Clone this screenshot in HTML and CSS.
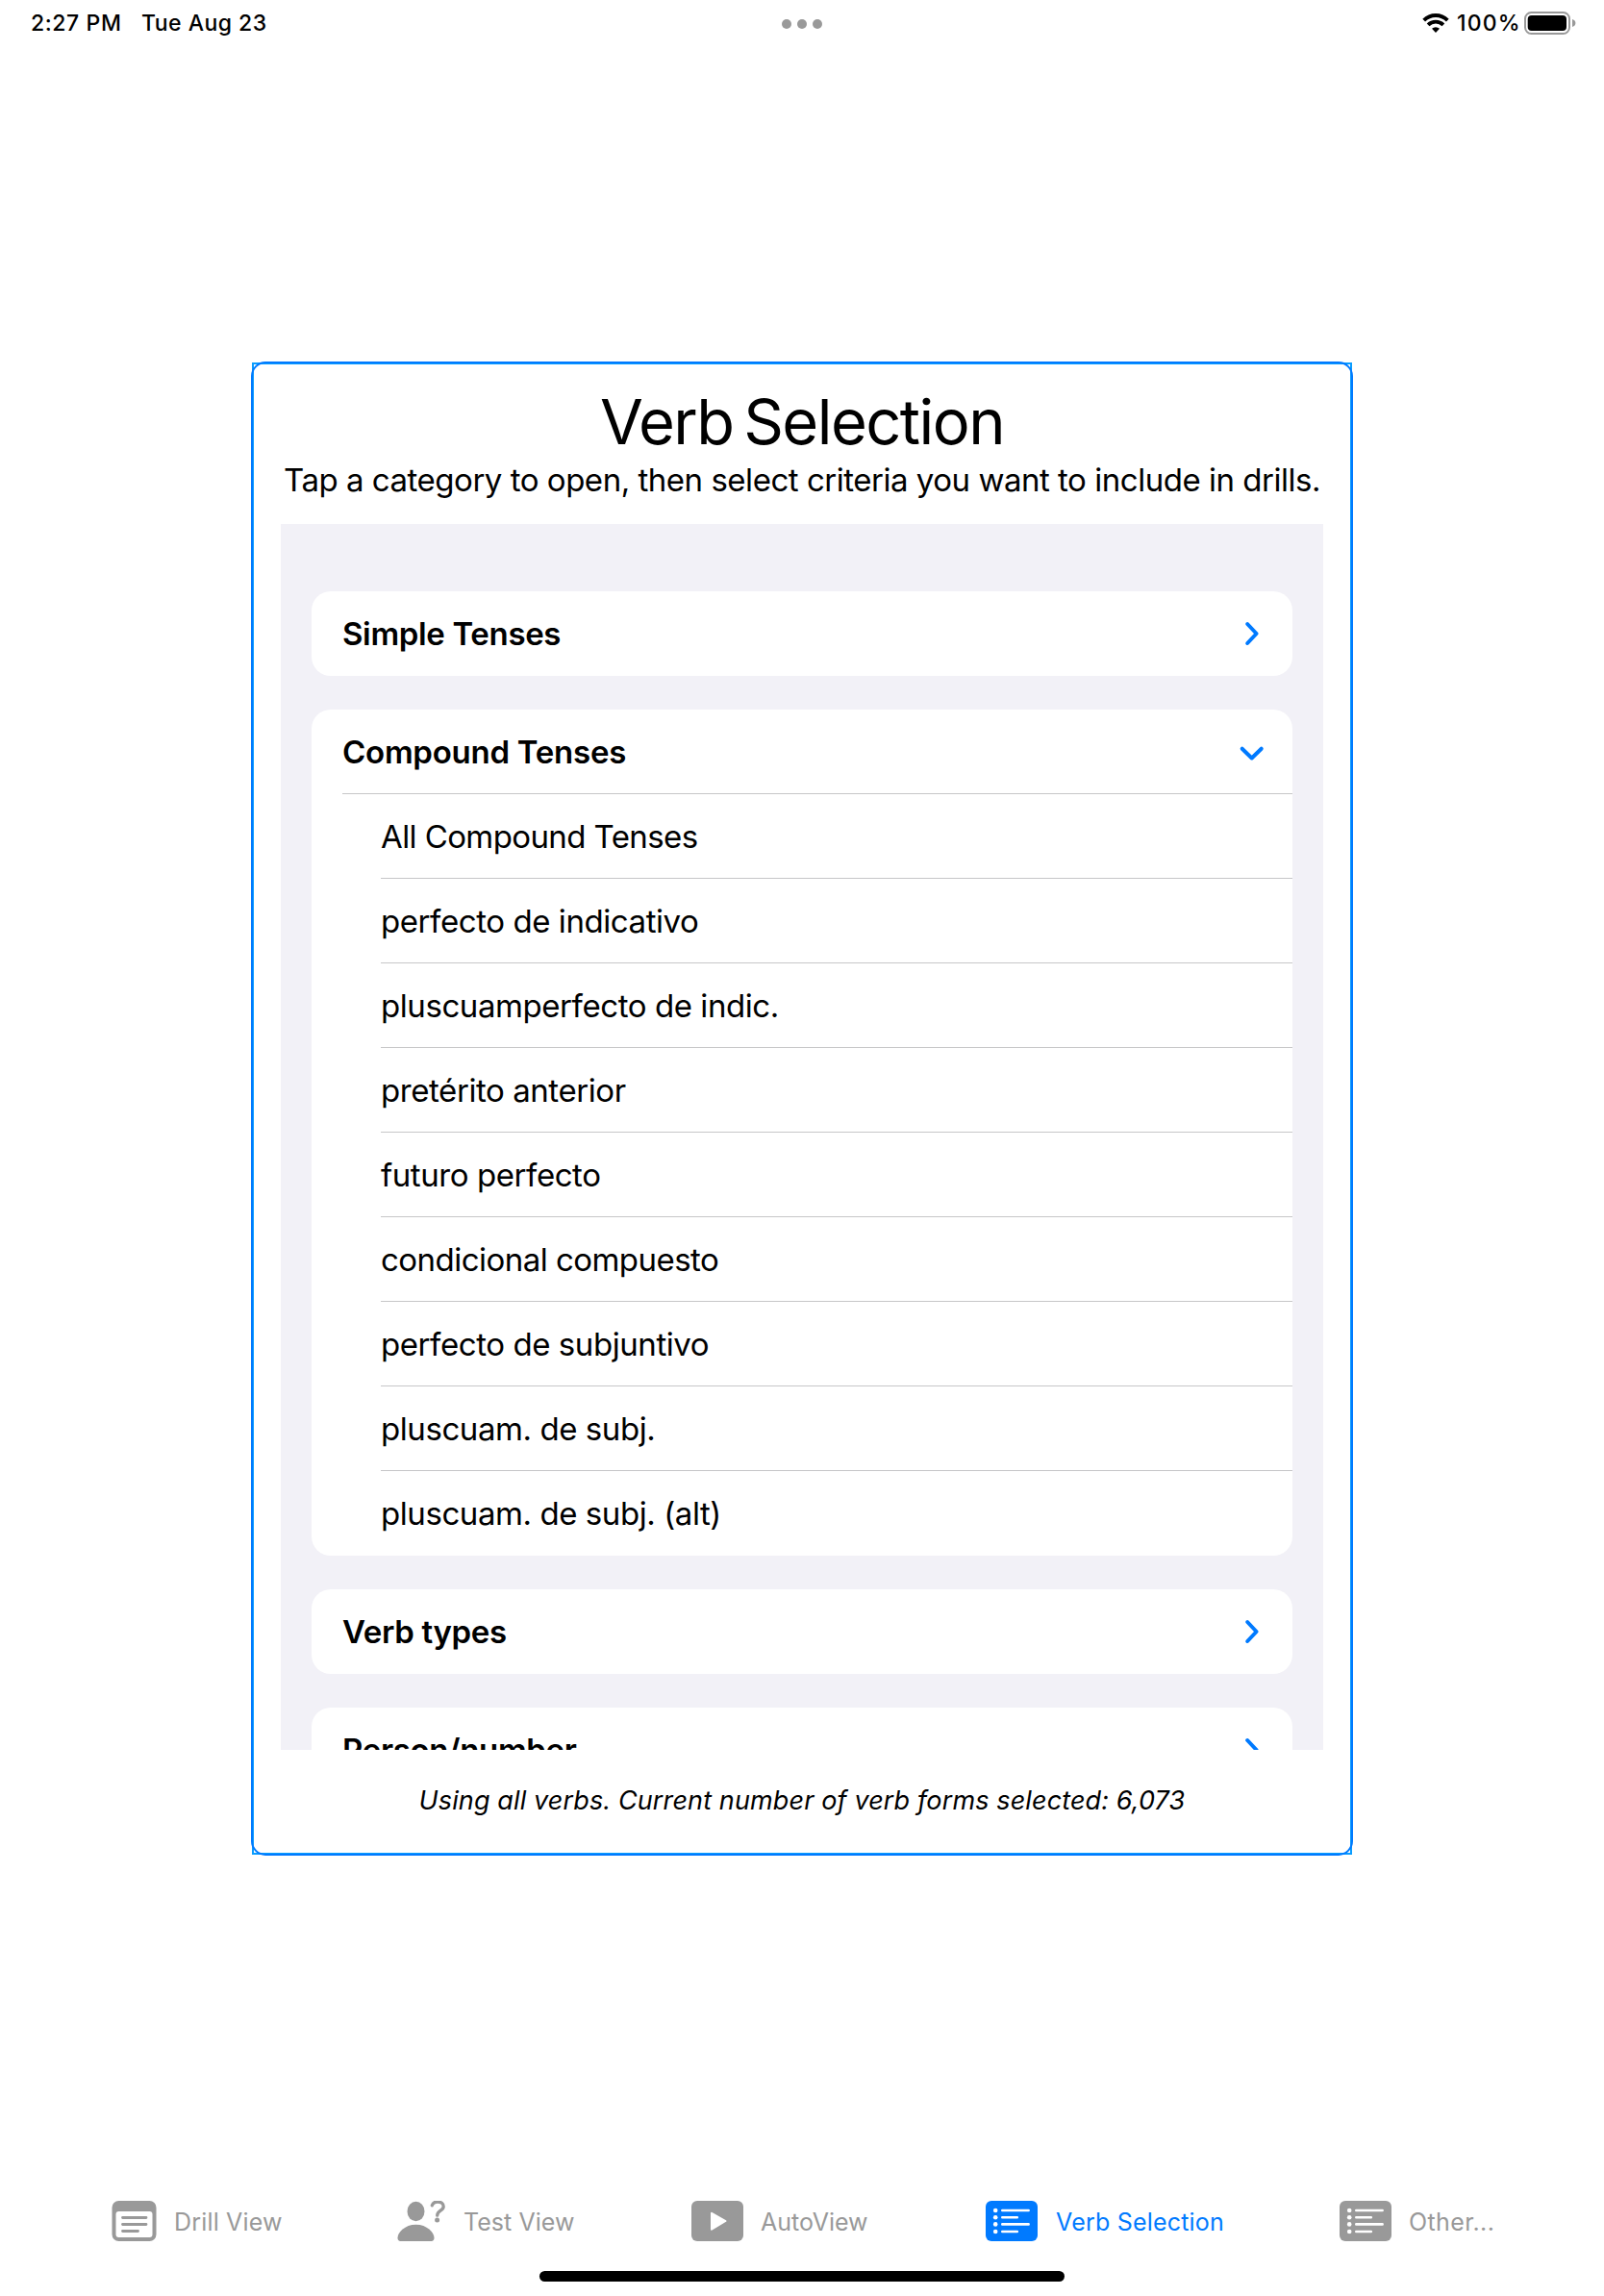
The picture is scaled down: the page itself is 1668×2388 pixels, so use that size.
FILE: index.html
```html
<!DOCTYPE html>
<html lang="en">
<head>
<meta charset="utf-8">
<title>Verb Selection</title>
<link rel="stylesheet" href="styles.css">
</head>
<body>
<header class="status">
  <span class="time">2:27 PM</span>
  <span class="date">Tue Aug 23</span>
  <span class="multitask"><i></i><i></i><i></i></span>
  <svg class="wifi" width="28" height="22" viewBox="0 0 28 22">
    <g fill="none" stroke="#000" stroke-width="3.9">
      <path d="M1.7 8.1a17.4 17.4 0 0 1 24.6 0"/>
      <path d="M6.1 12.8a11.3 11.3 0 0 1 15.8 0"/>
    </g>
    <path d="M14 21l-4-4.2a5.7 5.7 0 0 1 8 0z"/>
  </svg>
  <span class="percent">100%</span>
  <svg class="battery" width="54" height="24" viewBox="0 0 54 24">
    <rect x="1" y="1" width="46" height="22" rx="6.5" fill="none" stroke="#999" stroke-width="2"/>
    <rect x="3.7" y="4" width="40.3" height="16" rx="4"/>
    <path d="M50 8q3.4 1.2 3.4 4t-3.4 4z" fill="#999"/>
  </svg>
</header>

<main class="panel">
  <h1 class="title">Verb Selection</h1>
  <p class="subtitle">Tap a category to open, then select criteria you want to include in drills.</p>
  <div class="form">
    <section class="group">
      <div class="head"><span>Simple Tenses</span><svg class="chev" width="28" height="28" viewBox="0 0 28 28"><path d="M9.2 4l9.4 10-9.4 10"/></svg></div>
    </section>
    <section class="group">
      <div class="head open"><span class="wide">Compound Tenses</span><svg class="chev" width="28" height="28" viewBox="0 0 28 28"><path d="M3.700 10.700l10 9.800 10-9.800"/></svg></div>
      <ul class="rows">
        <li class="tight">All Compound Tenses</li>
        <li>perfecto de indicativo</li>
        <li>pluscuamperfecto de indic.</li>
        <li>pretérito anterior</li>
        <li>futuro perfecto</li>
        <li class="snug">condicional compuesto</li>
        <li>perfecto de subjuntivo</li>
        <li>pluscuam. de subj.</li>
        <li>pluscuam. de subj. (alt)</li>
      </ul>
    </section>
    <section class="group">
      <div class="head"><span>Verb types</span><svg class="chev" width="28" height="28" viewBox="0 0 28 28"><path d="M9.2 4l9.4 10-9.4 10"/></svg></div>
    </section>
    <section class="group">
      <div class="head"><span>Person/number</span><svg class="chev" width="28" height="28" viewBox="0 0 28 28"><path d="M9.2 4l9.4 10-9.4 10"/></svg></div>
    </section>
  </div>
  <p class="summary">Using all verbs. Current number of verb forms selected: 6,073</p>
</main>

<nav class="tabs">
  <a class="tab">
    <svg width="65" height="42" viewBox="0 0 65 42">
      <path fill="currentColor" fill-rule="evenodd" d="M7.500 0h32a7 7 0 0 1 7 7v28a7 7 0 0 1-7 7h-32a7 7 0 0 1-7-7v-28a7 7 0 0 1 7-7zM7.500 11a3 3 0 0 0-3 3v21a3 3 0 0 0 3 3h32a3 3 0 0 0 3-3v-21a3 3 0 0 0-3-3z"/>
      <path d="M11.500 17.500h24.500M11.500 24.500h24.500M11.500 31.500h16" stroke="currentColor" stroke-width="2.8" stroke-linecap="round"/>
    </svg>
    <span class="drill">Drill View</span>
  </a>
  <a class="tab">
    <svg width="69" height="42" viewBox="0 0 69 42">
      <ellipse cx="19.500" cy="11" rx="9" ry="10.200" fill="currentColor"/>
      <path d="M3.500 42C1.500 42 .5 40.800.5 38.500.5 33 8 24.800 19.500 24.800S38.500 33 38.500 38.500C38.500 40.800 37.500 42 35.500 42z" fill="currentColor"/>
      <path d="M36.300 4.800C37 2.400 39.100 1 42 1c3.600 0 6.200 2 6.200 4.900 0 4.400-6.500 4.200-6.500 9.300" fill="none" stroke="currentColor" stroke-width="3.300" stroke-linecap="round"/>
      <circle cx="41.600" cy="20" r="2.500" fill="currentColor"/>
    </svg>
    <span class="test">Test View</span>
  </a>
  <a class="tab">
    <svg width="72" height="42" viewBox="0 0 72 42">
      <rect width="54" height="42" rx="6" fill="currentColor"/>
      <path d="M21 12.800l14.500 8.200-14.500 8.700z" fill="#fff" stroke="#fff" stroke-width="2" stroke-linejoin="round"/>
    </svg>
    <span>AutoView</span>
  </a>
  <a class="tab active">
    <svg width="73" height="42" viewBox="0 0 73 42">
      <rect width="54" height="42" rx="6" fill="currentColor"/>
      <path d="M17.300 10h27.300M17.300 17.200h15.500M17.300 24.400h27.300M17.300 32h15.500" stroke="#fff" stroke-width="2.600" stroke-linecap="round"/>
      <g fill="#fff"><circle cx="10.200" cy="10" r="2.300"/><circle cx="10.200" cy="17.200" r="2.300"/><circle cx="10.200" cy="24.400" r="2.300"/><circle cx="10.200" cy="32" r="2.300"/></g>
    </svg>
    <span class="verb">Verb Selection</span>
  </a>
  <a class="tab">
    <svg width="72" height="42" viewBox="0 0 72 42">
      <rect width="54" height="42" rx="6" fill="currentColor"/>
      <path d="M17.300 10h27.300M17.300 17.200h15.500M17.300 24.400h27.300M17.300 32h15.500" stroke="#fff" stroke-width="2.600" stroke-linecap="round"/>
      <g fill="#fff"><circle cx="10.200" cy="10" r="2.300"/><circle cx="10.200" cy="17.200" r="2.300"/><circle cx="10.200" cy="24.400" r="2.300"/><circle cx="10.200" cy="32" r="2.300"/></g>
    </svg>
    <span class="other">Other...</span>
  </a>
</nav>
<div class="home"></div>
</body>
</html>
```
FILE: styles.css
```css
* { box-sizing: border-box; }

body {
  margin: 0;
  width: 1668px;
  height: 2388px;
  display: flex;
  flex-direction: column;
  align-items: center;
  background: #fff;
  color: #000;
  font-family: Inter, "Liberation Sans", sans-serif;
  overflow: hidden;
}

svg { display: block; flex: none; }

/* Status bar */
.status {
  width: 100%;
  height: 48px;
  display: flex;
  padding-left: 32px;
  font-size: 23px;
  font-weight: 500;
  line-height: 48px;
  white-space: nowrap;
}
.time { width: 115px; letter-spacing: 0.6px; }
.date { width: 666px; letter-spacing: 0.47px; }
.multitask { display: flex; gap: 6px; padding-top: 20px; width: 667px; }
.multitask i { width: 10px; height: 10px; border-radius: 50%; background: #999; }
.wifi { margin: 13px 8px 0 -1px; }
.percent { width: 70px; letter-spacing: 1.15px; }
.battery { margin-top: 12px; }

/* Main panel: a square inner outline under a rounded outer one */
.panel {
  position: relative;
  width: 1146px;
  height: 1554px;
  margin-top: 328px;
  padding: 21px 29px 0;
  border: 2px solid #007aff;
  border-radius: 15px;
}
.panel::before {
  content: "";
  position: absolute;
  z-index: -1;
  inset: -1px;
  border: 2px solid #0a9dff;
}
.title {
  margin: 0;
  font-size: 65px;
  font-weight: 400;
  line-height: 80px;
  letter-spacing: -1.54px;
  word-spacing: -6px;
  text-align: center;
}
.subtitle {
  margin: 0 0 26px;
  font-size: 33px;
  line-height: 40px;
  letter-spacing: -0.478px;
  text-align: center;
  white-space: nowrap;
}
.form {
  width: 1084px;
  height: 1275px;
  padding: 70px 32px 0;
  display: flex;
  flex-direction: column;
  gap: 35px;
  background: #f2f1f7;
  overflow: hidden;
}
.group { flex: none; border-radius: 20px; background: #fff; }
.head {
  height: 88px;
  margin-left: 32px;
  padding-right: 28px;
  display: flex;
  align-items: center;
  justify-content: space-between;
  font-size: 33px;
  font-weight: 600;
  line-height: 88px;
  letter-spacing: -0.34px;
}
.head.open { background: linear-gradient(#c6c6c8, #c6c6c8) bottom / 100% 1px no-repeat; }
.wide { letter-spacing: -0.25px; }
.chev { fill: none; stroke: #007aff; stroke-width: 4; stroke-linecap: round; stroke-linejoin: round; }
.rows { list-style: none; margin: 0; padding: 0 0 0 72px; }
.rows li {
  height: 88px;
  font-size: 33px;
  line-height: 88px;
  letter-spacing: -0.43px;
  border-bottom: 1px solid #c6c6c8;
}
.rows li:last-child { border-bottom: 0; }
.rows .tight { letter-spacing: -0.6px; }
.rows .snug { letter-spacing: -0.53px; }
.summary {
  margin: 36px 0 0;
  font-size: 27px;
  font-style: italic;
  line-height: 34px;
  letter-spacing: 0.124px;
  text-align: center;
}

/* Tab bar */
.tabs {
  width: 100%;
  margin-top: 359px;
  padding-left: 116px;
  display: grid;
  grid-template-columns: 297px 306px 306px 368px 1fr;
}
.tab {
  display: flex;
  color: #999;
  font-size: 25px;
  line-height: 44px;
  height: 42px;
  white-space: nowrap;
}
.tab.active { color: #007aff; }
.drill { letter-spacing: 0.17px; }
.test { letter-spacing: 0.05px; }
.verb { letter-spacing: 0.2px; }
.other { letter-spacing: 0.4px; }

/* Home indicator */
.home { width: 546px; height: 11px; margin-top: 31px; border-radius: 6px; background: #000; }
```
